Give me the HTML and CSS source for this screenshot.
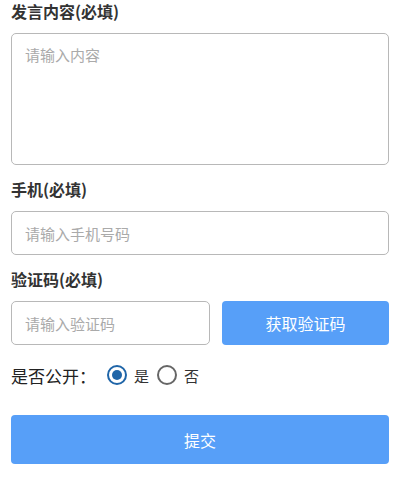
FILE: index.html
```html
<!DOCTYPE html>
<html lang="zh-CN">
<head>
    <meta charset="UTF-8">
    <meta name="viewport" content="width=device-width, initial-scale=1.0">
    <title>发言</title>
    <link rel="stylesheet" href="styles.css">
</head>
<body>
    <form class="speak-form">
        <div class="field">
            <label class="field-label">发言内容(必填)</label>
            <textarea class="field-area" placeholder="请输入内容"></textarea>
        </div>
        <div class="field">
            <label class="field-label">手机(必填)</label>
            <input type="text" class="field-input" placeholder="请输入手机号码">
        </div>
        <div class="field">
            <label class="field-label">验证码(必填)</label>
            <div class="code-row">
                <input type="text" class="field-input code-input" placeholder="请输入验证码">
                <button type="button" class="code-btn">获取验证码</button>
            </div>
        </div>
        <div class="public-row">
            <span class="public-label">是否公开：</span>
            <label class="radio">
                <input type="radio" name="public" checked>
                <span class="radio-dot"></span>
                <span class="radio-text">是</span>
            </label>
            <label class="radio">
                <input type="radio" name="public">
                <span class="radio-dot"></span>
                <span class="radio-text">否</span>
            </label>
        </div>
        <button type="submit" class="submit-btn">提交</button>
    </form>
</body>
</html>
```

FILE: styles.css
```css
body {
    margin: 0;
    padding: 0 11px;
    font-family: "Noto Sans CJK SC", "Noto Sans", sans-serif;
    color: #333;
    background: #fff;
}
.speak-form {
    display: flex;
    flex-direction: column;
}
.field {
    margin-bottom: 13px;
}
.field-label {
    display: block;
    font-size: 16px;
    font-weight: bold;
    line-height: 22px;
    margin-bottom: 11px;
    color: #333;
}
.field:first-child .field-label {
    padding-top: 1px;
    line-height: 21px;
}
.field-area,
.field-input {
    display: block;
    width: 100%;
    box-sizing: border-box;
    border: 1.5px solid #b8b8b8;
    border-radius: 5px;
    padding: 0 13px;
    font-family: inherit;
    font-size: 15px;
    color: #333;
    outline: none;
}
.field-area {
    height: 132px;
    padding-top: 10px;
    resize: none;
    line-height: 22px;
}
.field-input {
    height: 44px;
}
.field-area::placeholder,
.field-input::placeholder {
    color: #aaa;
}
.code-row {
    display: flex;
    gap: 12px;
}
.code-input {
    width: 199px;
    flex: none;
}
.code-btn {
    flex: 1;
    height: 44px;
    border: none;
    border-radius: 4px;
    background-color: #579ff8;
    color: #fff;
    font-family: inherit;
    font-size: 16px;
}
.public-row {
    display: flex;
    align-items: center;
    height: 34px;
    margin-bottom: 23px;
}
.public-label {
    font-size: 17px;
    margin-right: 11px;
    color: #222;
}
.radio {
    display: flex;
    align-items: center;
    margin-right: 8px;
}
.radio input {
    display: none;
}
.radio-dot {
    width: 20px;
    height: 20px;
    box-sizing: border-box;
    border: 2px solid #666;
    border-radius: 50%;
    display: flex;
    align-items: center;
    justify-content: center;
}
.radio input:checked + .radio-dot {
    border-color: #1f65a8;
}
.radio input:checked + .radio-dot::after {
    content: "";
    width: 10px;
    height: 10px;
    border-radius: 50%;
    background: #1f65a8;
}
.radio-text {
    font-size: 15px;
    margin-left: 7px;
    color: #333;
}
.submit-btn {
    height: 49px;
    border: none;
    border-radius: 4px;
    background-color: #579ff8;
    color: #fff;
    font-family: inherit;
    font-size: 16px;
}
```
